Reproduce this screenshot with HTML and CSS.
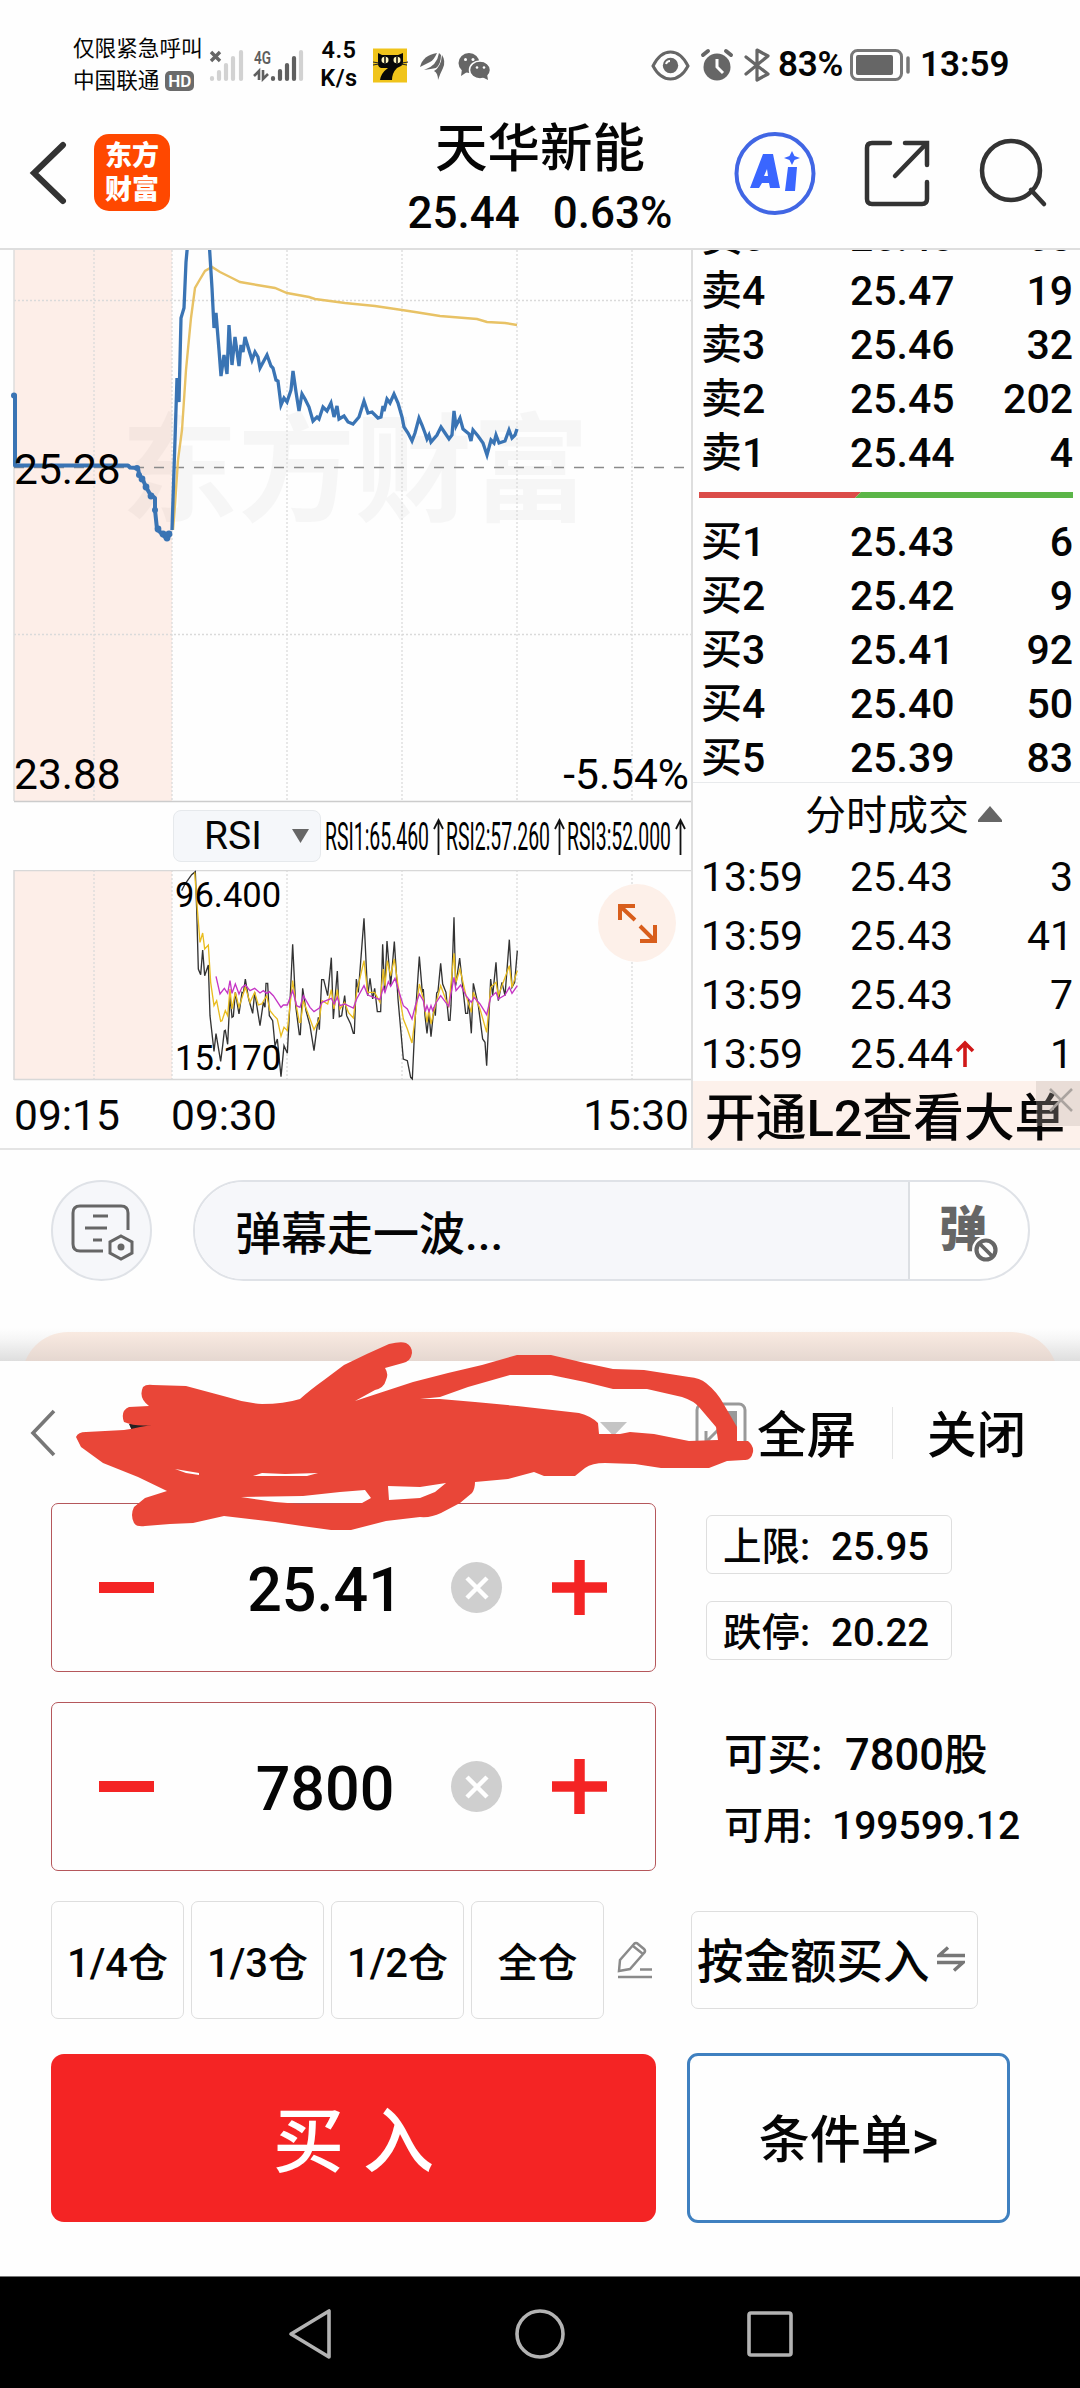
FILE: index.html
```html
<!DOCTYPE html>
<html lang="zh-CN">
<head>
<meta charset="utf-8">
<title>天华新能</title>
<link rel="stylesheet" href="styles.css">
</head>
<body>
<div class="phone">

  <div class="status">
    <div class="operator">
      <div>仅限紧急呼叫</div>
      <div class="operator-line">中国联通<span class="hd">HD</span></div>
    </div>
    <svg class="signals" width="103" height="34" viewBox="207 46 103 34">
      <path d="M211 50l9 9M220 50l-9 9" stroke="#666" stroke-width="3.4"/>
      <g stroke="#d2d2d2" stroke-width="4.2" stroke-linecap="round">
        <path d="M212 76v1M219 70v7M226 63v14M233 56v21M241 50v27M301 50v27"/>
      </g>
      <g stroke="#5f5f5f" stroke-width="4.2" stroke-linecap="round">
        <path d="M273 76v1M280 69v8M287 63v14M294 56v21"/>
      </g>
      <text x="254" y="62" textLength="17" lengthAdjust="spacingAndGlyphs" class="net">4G</text>
      <path d="M254 74l5-5v9M263 68v9l5-5" fill="none" stroke="#5f5f5f" stroke-width="2.6"/>
    </svg>
    <div class="speed"><div>4.5</div><div>K/s</div></div>
    <svg class="apps" width="122" height="36" viewBox="371 46 122 36">
      <rect x="373" y="47.500" width="34" height="34" fill="#f0c41b"/>
      <path d="M378 52l4 2h16l5-2v10q0 2-2 3l-4 2q-5 5-5 12h-12q1-7 8-12h-7q-2 0-3-3z" fill="#080808"/>
      <path d="M373 61l6 1M373 64l6-1M402 62l6-1M401 63l6 1" stroke="#222" stroke-width="1"/>
      <ellipse cx="385" cy="59" rx="3.500" ry="3.300" fill="#fff6bd"/><ellipse cx="397" cy="59" rx="3.500" ry="3.300" fill="#fff6bd"/>
      <path d="M385 56v6M397 56v6" stroke="#111" stroke-width="1.600"/>
      <g fill="#666">
        <path d="M420 66Q423 54 437 52Q434 59 430 61Q426 63 420 66Z"/>
        <path d="M424 69Q437 65 439 52L441 54Q441 63 436 67Q431 68 424 69Z"/>
        <path d="M434 70Q441 66 442 54Q446 60 443 67Q440 73 438 79Q438 72 434 70Z"/>
      </g>
      <g fill="#666">
        <ellipse cx="469" cy="62" rx="10.500" ry="10"/><path d="M462 68l-1 7 6-4z"/>
        <ellipse cx="480" cy="69" rx="10.500" ry="9" stroke="#fff" stroke-width="1.500"/><path d="M482 76l6 3-1-6z"/>
      </g>
      <g fill="#fff"><circle cx="465.500" cy="58.500" r="1.500"/><circle cx="473" cy="58.500" r="1.500"/><circle cx="477" cy="66.500" r="1.300"/><circle cx="484" cy="66.500" r="1.300"/></g>
    </svg>
    <div class="status-right">
      <svg width="122" height="36" viewBox="650 46 122 36">
        <path d="M653 65Q660 51 670.500 51T688 65Q681 78 670.500 78T653 65Z" fill="none" stroke="#666" stroke-width="3"/>
        <circle cx="670.500" cy="64.500" r="7.700" fill="#666"/><path d="M666 63q1-3 4-3" stroke="#fff" stroke-width="2" fill="none"/>
        <circle cx="717" cy="66" r="13.500" fill="#666"/>
        <path d="M703 54l5-4M731 54l-5-4" stroke="#666" stroke-width="4" stroke-linecap="round"/>
        <path d="M717 58v8l6 6" stroke="#fff" stroke-width="3" fill="none"/>
        <path d="M746 56l22 17-11 6V49l11 6-22 18" fill="none" stroke="#666" stroke-width="3.200" stroke-linejoin="round" stroke-linecap="round"/>
      </svg>
      <span class="percent">83%</span>
      <svg class="battery" width="62" height="34" viewBox="849 47 62 34">
        <rect x="851.500" y="49.500" width="50" height="29" rx="6" fill="none" stroke="#777" stroke-width="3"/>
        <rect x="856" y="54" width="37" height="20" rx="2" fill="#666"/>
        <path d="M908 57v14" stroke="#777" stroke-width="3.500" stroke-linecap="round"/>
      </svg>
      <span class="clock">13:59</span>
    </div>
  </div>

  <header class="header">
    <div class="header-left">
      <svg width="40" height="64" viewBox="0 0 40 64"><path d="M34 4L5 32l29 28" fill="none" stroke="#333" stroke-width="6" stroke-linecap="round"/></svg>
      <div class="logo"><span>东方</span><span>财富</span></div>
    </div>
    <div class="header-title">
      <h1>天华新能</h1>
      <div class="quote"><span>25.44</span><span>0.63%</span></div>
    </div>
    <div class="header-right">
      <svg width="82" height="84" viewBox="734 131 82 84">
        <ellipse cx="775" cy="173.500" rx="38.500" ry="39.500" fill="none" stroke="#4166e4" stroke-width="4"/>
        <path fill="#3a66ff" fill-rule="evenodd" d="M763 154h10l7 34h-10l-1-5h-7l-3 5h-9zM767 169l-3 7h4zM788 167h9l-2 24h-10zM792 151l2.500 5 5.500 2-5.500 2-2.500 5-2.500-5-5.500-2 5.500-2z"/>
      </svg>
      <svg width="70" height="70" viewBox="861 138 70 70">
        <path d="M889 143h-18q-5 0-5 5v51q0 5 5 5h50q5 0 5-5v-17M904 143h22v22M925 144l-31 32" fill="none" stroke="#333" stroke-width="4.500" stroke-linecap="round"/>
      </svg>
      <svg width="70" height="72" viewBox="978 137 70 72">
        <ellipse cx="1011" cy="170.500" rx="29" ry="29.500" fill="none" stroke="#333" stroke-width="4.500"/>
        <path d="M1031 190l13 14" stroke="#333" stroke-width="4.500" stroke-linecap="round"/>
      </svg>
    </div>
  </header>

  <main class="market">
    <section class="charts">
      <svg class="price-chart" width="691" height="553" viewBox="0 250 691 553">
        <rect x="14" y="250" width="158" height="551" fill="#fdeee8"/>
        <text x="121" y="512" textLength="468" class="watermark">东方财富</text>
        <g class="grid"><path d="M94 250v551M172 250v551M287 250v551M402 250v551M517 250v551M632 250v551M14 300.500h677M14 634.500h677"/></g>
        <path d="M14 250v551" stroke="#ddd" stroke-width="1.500"/>
        <path d="M14 801.500h677" stroke="#ccc" stroke-width="1.500"/>
        <path d="M14 467.500h677" stroke="#8b8b8b" stroke-width="1.600" stroke-dasharray="10 10"/>
        <polyline class="average" points="173,530 175,505 178,460 182,430 186,370 191,318 195,288 199,281 205,271 212,267 220,272 232,278 240,282 257,285 275,288 287,293 309,297 315,299 345,303 375,306 402,310 415,312 440,316 477,319 487,322 505,323 517,325"/>
        <polyline class="auction" points="15,396 15,465.500 128,465.500 130,467.500 138,468 139,474 143,480 146,487 150,494 155,498 155,510 157,529 162,534 167,539 170,534"/>
        <g fill="#3a74b4"><circle cx="14" cy="395.500" r="3"/><circle cx="137" cy="468" r="3"/><circle cx="139" cy="475" r="3"/><circle cx="142" cy="479" r="3.400"/><circle cx="146" cy="487" r="3.400"/><circle cx="151" cy="496" r="3.400"/><circle cx="155" cy="510" r="3"/><circle cx="158" cy="529" r="3.400"/><circle cx="163" cy="534" r="3.400"/><circle cx="167" cy="538" r="3.400"/><circle cx="169" cy="534" r="3.400"/></g>
        <polyline class="price" points="172,530 175,440 177,378 179,402 181,318 184,308 186,262 188,240 209,240 212,288 214,328 216,313 219,350 221,376 224,355 227,374 229,325 232,365 235,337 239,366 241,345 243,352 245,337 252,360 255,352 258,357 260,368 267,355 271,366 273,368 276,380 278,381 281,405 284,398 287,402 291,390 293,371 296,392 299,411 302,394 305,399 309,407 313,421 317,417 319,419 323,407 327,411 331,403 334,417 337,406 339,419 344,416 348,422 353,424 359,417 364,401 368,413 372,412 378,418 381,417 383,406 384,411 387,399 390,403 394,394 398,403 402,417 404,427 408,433 412,441 415,433 419,418 422,425 425,433 427,439 429,435 431,442 437,435 441,427 445,433 449,439 452,435 454,411 456,426 460,418 463,429 469,434 471,441 473,430 478,436 483,443 487,455 491,440 494,443 496,435 499,443 505,441 509,430 512,438 515,435 517,429"/>
        <text x="14" y="484" class="scale">25.28</text>
        <text x="14" y="789" class="scale">23.88</text>
        <text x="689" y="789" class="scale" text-anchor="end">-5.54%</text>
      </svg>

      <div class="indicator">
        <div class="picker"><span>RSI</span><svg width="18" height="15" viewBox="0 0 18 15"><path d="M0 0h17L8.500 14z" fill="#666"/></svg></div>
        <svg class="readings" width="366" height="52" viewBox="325 810 366 52">
          <text x="325" y="850" textLength="104" lengthAdjust="spacingAndGlyphs">RSI1:65.460</text>
          <text x="446" y="850" textLength="104" lengthAdjust="spacingAndGlyphs">RSI2:57.260</text>
          <text x="567" y="850" textLength="104" lengthAdjust="spacingAndGlyphs">RSI3:52.000</text>
          <path d="M438.500 855v-34M434 829l4.500-9 4.500 9M559.500 855v-34M555 829l4.500-9 4.500 9M680.500 855v-34M676 829l4.500-9 4.500 9" fill="none" stroke="#111" stroke-width="1.800"/>
        </svg>
      </div>

      <svg class="rsi-chart" width="691" height="211" viewBox="0 871 691 211">
        <rect x="14" y="871" width="158" height="210" fill="#fdeee8"/>
        <g class="grid"><path d="M94 871v210M172 871v210M287 871v210M402 871v210M517 871v210M632 871v210"/></g>
        <path d="M14 871.500h677M14 1080.500h677M14 871v210" fill="none" stroke="#d8d8d8" stroke-width="1.500"/>
        <g transform="translate(170 860) scale(.33333)" class="rsi-lines">
          <polyline stroke="#333" points="35,95 45,75 65,47 76,38 80,150 85,330 92,347 98,273 104,350 115,318 120,470 132,577 138,524 152,607 158,560 163,516 166,514 173,556 180,410 186,475 190,472 196,400 207,465 216,400 220,402 226,360 236,420 248,463 254,400 270,500 280,430 285,445 288,373 293,373 298,470 308,485 315,560 322,540 333,653 342,560 352,583 360,430 368,256 377,440 388,527 391,527 398,388 408,455 420,500 432,575 445,475 448,512 455,362 461,362 473,410 484,296 490,480 502,336 508,473 515,470 524,410 530,470 542,495 550,523 553,523 559,360 565,400 582,178 593,410 600,358 608,420 614,388 622,458 632,458 638,256 644,400 651,246 662,380 673,248 684,420 700,600 712,605 722,655 727,660 736,470 748,293 757,400 760,390 765,470 771,523 777,465 783,533 792,445 796,470 800,402 804,397 812,313 818,375 828,400 836,484 840,484 843,440 852,175 857,380 869,297 880,400 887,463 893,463 896,420 904,523 910,373 925,440 938,540 945,550 950,620 962,360 968,410 978,310 985,425 996,370 1005,410 1018,242 1026,385 1034,370 1042,275"/>
          <polyline stroke="#e9bd20" points="74,40 82,150 90,250 98,222 104,270 115,258 122,370 132,440 140,425 152,487 156,485 166,455 173,470 180,390 186,450 196,400 207,445 226,385 240,430 254,400 265,438 275,435 290,410 300,455 312,470 322,480 333,532 342,505 352,515 368,365 377,430 388,490 392,490 400,425 420,480 432,512 448,480 456,425 473,435 484,392 492,450 502,392 510,450 524,430 535,460 550,477 560,400 582,305 593,400 614,400 630,430 640,330 645,380 652,305 662,350 673,300 684,380 700,480 712,510 726,552 736,470 748,375 760,420 771,490 777,450 783,495 796,440 812,380 836,445 852,283 858,370 870,330 888,410 904,460 910,400 930,450 950,520 962,385 978,370 985,410 1018,320 1026,385 1042,335"/>
          <polyline stroke="#c535c5" points="138,352 150,405 163,388 173,403 180,365 186,403 196,375 207,405 216,385 226,378 240,395 254,388 270,402 280,395 290,403 298,398 310,410 333,445 340,438 352,438 368,395 380,440 390,445 400,410 420,445 432,458 448,447 456,430 484,418 492,435 502,415 510,440 524,435 550,447 560,420 582,380 593,408 630,422 640,385 645,400 655,368 662,382 675,358 686,395 700,440 712,450 726,480 736,440 748,405 760,425 766,458 771,440 777,458 783,440 788,455 796,435 812,410 836,442 852,355 858,395 872,378 888,410 904,430 912,415 930,435 950,467 962,415 978,400 985,420 1005,408 1018,385 1026,403 1042,380"/>
        </g>
        <text x="175" y="908" class="bound">96.400</text>
        <text x="175" y="1071" class="bound">15.170</text>
        <ellipse cx="637" cy="924" rx="39" ry="39" fill="#fdf0e9"/>
        <path d="M620 921v-14h15M620 907l15 14M655 926v16h-15M640 927l15 15" fill="none" stroke="#d85e1c" stroke-width="4"/>
      </svg>

      <div class="axis"><span>09:15</span><span>09:30</span><span class="axis-end">15:30</span></div>
    </section>

    <aside class="book">
      <div class="depth sells">
        <div class="level"><span>卖5</span><span>25.48</span><span>63</span></div>
        <div class="level"><span>卖4</span><span>25.47</span><span>19</span></div>
        <div class="level"><span>卖3</span><span>25.46</span><span>32</span></div>
        <div class="level"><span>卖2</span><span>25.45</span><span>202</span></div>
        <div class="level"><span>卖1</span><span>25.44</span><span>4</span></div>
      </div>
      <svg class="ratio" width="374" height="6" viewBox="0 0 374 6"><path d="M0 0h162l-6 6H0z" fill="#db4c49"/><path d="M162 0h212v6H156z" fill="#5bb548"/></svg>
      <div class="depth buys">
        <div class="level"><span>买1</span><span>25.43</span><span>6</span></div>
        <div class="level"><span>买2</span><span>25.42</span><span>9</span></div>
        <div class="level"><span>买3</span><span>25.41</span><span>92</span></div>
        <div class="level"><span>买4</span><span>25.40</span><span>50</span></div>
        <div class="level"><span>买5</span><span>25.39</span><span>83</span></div>
      </div>
      <div class="ticks-title">分时成交<svg width="24" height="16" viewBox="0 0 24 16"><path d="M12 0l12 14v2H0v-2z" fill="#666"/></svg></div>
      <div class="ticks">
        <div class="tick"><span>13:59</span><span>25.43</span><span>3</span></div>
        <div class="tick"><span>13:59</span><span>25.43</span><span>41</span></div>
        <div class="tick"><span>13:59</span><span>25.43</span><span>7</span></div>
        <div class="tick"><span>13:59</span><span>25.44<svg width="20" height="28" viewBox="0 0 20 28"><path d="M10 27V3M2 11l8-8 8 8" fill="none" stroke="#d01818" stroke-width="3.600"/></svg></span><span>1</span></div>
      </div>
      <div class="banner">开通L2查看大单
        <div class="banner-close"><svg width="26" height="26" viewBox="0 0 26 26"><path d="M2 2l22 22M24 2L2 24" stroke="#aaa39f" stroke-width="2.500"/></svg></div>
      </div>
    </aside>
  </main>

  <section class="comments">
    <div class="comment-row">
      <div class="round">
        <svg width="66" height="60" viewBox="70 1202 66 60">
          <g fill="none" stroke="#666" stroke-width="3">
            <path d="M129 1231v-17q0-7-7-7H81q-7 0-7 7v31q0 7 7 7h23M94 1217h15M86 1229h22M94 1241h9" />
            <path d="M122 1237l11 6v11l-11 6-11-6v-11z"/>
          </g><circle cx="122" cy="1248" r="3.500" fill="#666"/>
        </svg>
      </div>
      <div class="pill">
        <div class="pill-input">弹幕走一波...</div>
        <div class="pill-toggle"><span>弹</span>
          <svg class="ban" width="28" height="28" viewBox="0 0 28 28"><circle cx="14" cy="14" r="14" fill="#fefefe"/><circle cx="14" cy="14" r="9.500" fill="none" stroke="#666" stroke-width="4.200"/><path d="M8 8l12 12" stroke="#666" stroke-width="3.800"/></svg>
        </div>
      </div>
    </div>
    <div class="peek"></div>
  </section>

  <section class="sheet">
    <div class="sheet-head">
      <svg class="sheet-back" width="28" height="50" viewBox="0 0 28 50"><path d="M25 3L4 25l21 22" fill="none" stroke="#777" stroke-width="3.600"/></svg>
      <svg class="caret" width="27" height="14" viewBox="0 0 27 14"><path d="M0 0h27L13.500 14z" fill="#c4c4c4"/></svg>
      <svg class="full-icon" width="52" height="56" viewBox="0 0 52 56"><rect x="2" y="4" width="48" height="50" rx="6" fill="none" stroke="#999" stroke-width="3"/><path d="M24 11h18v18z" fill="#999"/><path d="M11 31v11h11M11 42l13-13" fill="none" stroke="#999" stroke-width="3"/></svg>
      <span class="full">全屏</span>
      <span class="rule"></span>
      <span class="close">关闭</span>
      <svg class="scribble" width="690" height="200" viewBox="70 1337 690 200">
        <path d="M129 1424h25v5h-6l-4-2-4 4h-8z" fill="#222"/>
        <path fill="#e94638" fill-rule="evenodd" d="M76 1437Q78 1432 86 1432L124 1430Q132 1429 140 1427L152 1425Q136 1427 124 1422Q120 1411 129 1407L149 1406Q138 1398 143 1387Q146 1384 153 1385L186 1386L227 1397Q245 1403 262 1404Q284 1404 300 1399Q310 1390 324 1380L344 1365Q366 1354 389 1344Q401 1341 406 1343Q412 1346 412 1353Q411 1361 403 1363L385 1368Q389 1374 386 1380Q384 1388 375 1390L355 1401L413 1382L448 1373L482 1365L517 1355H551L585 1363L613 1369L644 1370L689 1377Q700 1378 706 1383Q717 1392 723 1403L737 1427V1441L748 1441Q754 1446 753 1452Q751 1461 744 1460L727 1461L709 1468H661L635 1464L605 1463Q592 1463 585 1468L575 1476H544L534 1472L508 1479L475 1482Q475 1489 472 1493L460 1503L441 1513Q431 1518 420 1517L386 1521L351 1530H331L302 1526L275 1522L241 1518L224 1516L193 1523L170 1524L145 1526Q136 1527 134 1523Q130 1515 134 1507L145 1498L167 1491L138 1477L103 1463L81 1447Z
        M420 1399L440 1397L468 1387L510 1375H551L585 1382L613 1389H647L682 1397Q694 1401 699 1407L716 1427L718 1440L689 1441L654 1434L630 1432L620 1434H599L598 1423Q591 1416 579 1413L517 1406L475 1402L440 1399Z
        M241 1497L303 1496L340 1492L365 1490L371 1498L362 1503L300 1504L275 1502Z M388 1486L420 1487L446 1483L435 1492L420 1498L389 1500Z M253 1476L262 1473L285 1474L318 1473L307 1476Z M175 1469L199 1473V1475L186 1473Z"/>
      </svg>
    </div>

    <div class="form">
      <div class="stepper">
        <svg width="55" height="55" viewBox="0 0 55 55"><path d="M0 27.500h55" stroke="#f42424" stroke-width="11"/></svg>
        <span class="value">25.41</span>
        <span class="clear"><svg width="26" height="26" viewBox="0 0 26 26"><path d="M3 3l20 20M23 3L3 23" stroke="#fff" stroke-width="4.500"/></svg></span>
        <svg class="plus" width="55" height="55" viewBox="0 0 55 55"><path d="M0 27.500h55M27.500 0v55" stroke="#f42424" stroke-width="10.500"/></svg>
      </div>
      <div class="limits">
        <div class="limit"><span>上限:</span><span>25.95</span></div>
        <div class="limit"><span>跌停:</span><span>20.22</span></div>
      </div>

      <div class="stepper">
        <svg width="55" height="55" viewBox="0 0 55 55"><path d="M0 27.500h55" stroke="#f42424" stroke-width="11"/></svg>
        <span class="value">7800</span>
        <span class="clear"><svg width="26" height="26" viewBox="0 0 26 26"><path d="M3 3l20 20M23 3L3 23" stroke="#fff" stroke-width="4.500"/></svg></span>
        <svg class="plus" width="55" height="55" viewBox="0 0 55 55"><path d="M0 27.500h55M27.500 0v55" stroke="#f42424" stroke-width="10.500"/></svg>
      </div>
      <div class="funds">
        <div class="fund shares"><span>可买:</span><span>7800股</span></div>
        <div class="fund"><span>可用:</span><span>199599.12</span></div>
      </div>

      <div class="portions">
        <button>1/4仓</button><button>1/3仓</button><button>1/2仓</button><button>全仓</button>
        <svg width="36" height="38" viewBox="616 1942 36 38"><path d="M619 1972l1-11 14-16q2-2 4 0l6 5q2 2 0 4l-14 16zM618 1978h34M640 1970.500h12M633 1947l10 8" fill="none" stroke="#8a8a8a" stroke-width="2.500"/></svg>
      </div>
      <div class="mode"><span>按金额买入</span><svg width="28" height="26" viewBox="0 0 28 26"><path d="M28 9.500H2l9-8M0 16.500h26l-9 8" fill="none" stroke="#777" stroke-width="3.400"/></svg></div>

      <button class="buy">买<span>入</span></button>
      <button class="condition">条件单&gt;</button>
    </div>
  </section>

  <nav class="navbar">
    <svg width="48" height="56" viewBox="0 0 48 56"><path d="M43 5v46L5 28z" fill="none" stroke="#b3b3b3" stroke-width="3.600" stroke-linejoin="round"/></svg>
    <svg width="56" height="56" viewBox="0 0 56 56"><circle cx="28" cy="28" r="23" fill="none" stroke="#b3b3b3" stroke-width="3.600"/></svg>
    <svg width="48" height="56" viewBox="0 0 48 56"><rect x="3" y="7" width="42" height="42" rx="2" fill="none" stroke="#b3b3b3" stroke-width="3.600"/></svg>
  </nav>
</div>
</body>
</html>
```
FILE: styles.css
```css
* { box-sizing: border-box; }
body {
  margin: 0;
  background: #fdfdfd;
  color: #050505;
  font-family: Roboto, "Noto Sans CJK SC", sans-serif;
}
svg { display: block; flex: none; }
button { font: inherit; color: inherit; padding: 0; margin: 0; background: none; }
.phone { width: 1080px; height: 2388px; overflow: hidden; display: flex; flex-direction: column; background: #fefefe; }

/* system status bar */
.status { height: 97px; flex: none; padding: 32px 0 0 73px; display: flex; align-items: center; }
.operator { width: 134px; font-size: 21.6px; line-height: 32px; white-space: nowrap; }
.operator-line { display: flex; align-items: center; }
.hd { margin-left: 6px; width: 29px; height: 20px; border-radius: 5px; background: #6b6b6b; color: #fff; font-size: 17px; line-height: 20px; font-weight: 600; text-align: center; }
.net { font: 600 19px Roboto, sans-serif; fill: #5f5f5f; }
.speed { width: 42px; margin-left: 8px; font-size: 23.5px; line-height: 27.500px; font-weight: 600; text-align: center; white-space: nowrap; letter-spacing: .5px; }
.apps { margin-left: 11px; }
.status-right { flex: 1; display: flex; align-items: center; padding-left: 157px; font-size: 35px; line-height: 40px; font-weight: 600; }
.percent { width: 71px; margin-left: 6px; white-space: nowrap; letter-spacing: -.3px; }
.clock { margin-left: 9px; }

/* title bar */
.header { height: 153px; flex: none; display: flex; align-items: center; border-bottom: 2px solid #dedede; }
.header-left { width: 400px; padding-left: 29px; display: flex; align-items: center; gap: 25px; }
.logo { width: 76px; height: 77px; border-radius: 15px; background: #ff4800; color: #fff; font-size: 27px; font-weight: 900; line-height: 34px; padding-top: 5px; display: flex; flex-direction: column; align-items: center; }
.header-title { width: 280px; height: 151px; padding-top: 19px; text-align: center; white-space: nowrap; }
h1 { margin: 0; font-size: 52.500px; line-height: 66px; font-weight: 500; }
.quote { display: flex; justify-content: center; gap: 33px; font-size: 44px; line-height: 62px; font-weight: 500; }
.header-right { padding-left: 54px; display: flex; align-items: center; gap: 46px; }

/* charts and order book */
.market { height: 900px; flex: none; display: flex; border-bottom: 2px solid #e4e4e4; }
.charts { width: 691px; display: flex; flex-direction: column; }
.grid path { fill: none; stroke: #dadada; stroke-width: 1.300; stroke-dasharray: 2 2; }
.watermark { font: 700 117px "Noto Sans CJK SC", sans-serif; fill: #000; opacity: .028; }
.average { fill: none; stroke: #e8c265; stroke-width: 2.400; }
.auction { fill: none; stroke: #3a74b4; stroke-width: 4; stroke-linejoin: round; stroke-linecap: round; }
.price { fill: none; stroke: #3a74b4; stroke-width: 3.300; }
.scale { font-size: 42.500px; }
.bound { font-size: 34.500px; }
.indicator { height: 68px; padding-left: 173px; display: flex; align-items: flex-start; padding-top: 7px; gap: 4px; }
.picker { width: 148px; height: 52px; border: 1px solid #e6e9ec; border-radius: 8px; background: #f5f7fa; display: flex; align-items: center; justify-content: space-between; padding: 0 10px 0 30px; font-size: 39px; line-height: 50px; }
.readings { font-size: 39.500px; }
.rsi-lines polyline { fill: none; stroke-width: 4; }
.axis { height: 67px; padding: 0 2px 0 14px; display: flex; font-size: 42.500px; line-height: 70px; }
.axis span { width: 157px; white-space: nowrap; }
.axis .axis-end { flex: 1; text-align: right; }

.book { width: 389px; border-left: 2px solid #dedede; overflow: hidden; }
.sells { margin-top: -40.500px; }
.level, .tick { display: flex; height: 54px; line-height: 54px; padding: 0 7px 0 8px; font-size: 41px; font-weight: 500; white-space: nowrap; }
.level span:nth-child(1), .tick > span:nth-child(1) { width: 149px; }
.level span:nth-child(2), .tick > span:nth-child(2) { width: 130px; display: flex; align-items: center; }
.level span:nth-child(3), .tick > span:nth-child(3) { flex: 1; text-align: right; }
.ratio { margin: 12px 7px 17px 6px; }
.buys { height: 268px; border-bottom: 1px solid #e8eaec; }
.ticks-title { height: 65px; padding-left: 112px; display: flex; align-items: center; gap: 9px; font-size: 41px; line-height: 64px; padding-top: 1px; }
.ticks-title svg { margin-top: -4px; }
.tick { height: 59px; line-height: 59px; font-weight: 400; }
.tick svg { margin-left: 2px; }
.banner { position: relative; height: 68px; margin-top: -3px; padding-left: 12px; background: #fdf1eb; font-size: 50.700px; line-height: 76px; font-weight: 500; white-space: nowrap; }
.banner-close { position: absolute; right: 0; top: 0; width: 44px; height: 45px; background: rgba(190, 175, 168, .3); padding: 6px 0 0 12px; }

/* comment entry */
.comments { height: 211px; flex: none; padding-top: 30px; background: linear-gradient(#fefefe 178px, #f5f5f5 190px, #dedede 211px); overflow: hidden; }
.comment-row { display: flex; padding-left: 51px; gap: 41px; }
.round { width: 101px; height: 101px; border: 2px solid #dfe2e7; border-radius: 50%; background: #f6f7fa; display: flex; align-items: center; justify-content: center; }
.pill { width: 837px; height: 101px; border: 2px solid #dfe2e7; border-radius: 51px; overflow: hidden; display: flex; background: #fefefe; }
.pill-input { width: 715px; padding-left: 40px; background: #f6f7fa; border-right: 2px solid #dcdfe3; font-size: 46px; line-height: 105px; font-weight: 500; }
.pill-toggle { display: flex; padding-left: 29px; color: #666; font-size: 48px; line-height: 96px; font-weight: 900; }
.ban { margin: 54px 0 0 -15px; }
.peek { height: 92px; margin: 51px 22px 0; border-radius: 46px; background: linear-gradient(#f9eae1, #e5d7d0 29px); }

/* order sheet */
.sheet { height: 915px; flex: none; background: #fefefe; }
.sheet-head { position: relative; height: 142px; padding: 2px 0 0 29px; display: flex; align-items: center; font-size: 49.500px; line-height: 60px; font-weight: 500; white-space: nowrap; }
.caret { margin: -8px 0 0 543px; }
.full-icon { margin: -10px 0 0 68px; }
.full, .close { padding-top: 5px; }
.full { margin-left: 10px; }
.rule { width: 1px; height: 52px; margin: 0 34px 0 36px; background: #e4e4e4; }
.scribble { position: absolute; left: 70px; top: -24px; }
.form { display: grid; grid-template-columns: 605px auto; grid-template-rows: 169px 169px 118px 169px; row-gap: 30px; padding-left: 51px; justify-content: start; }
.stepper { border: 1.500px solid #b5575b; border-radius: 7px; display: flex; align-items: center; padding-left: 47px; }
.value { width: 250px; margin-left: 46px; font-size: 61px; line-height: 70px; font-weight: 500; text-align: center; padding-top: 5px; }
.clear { width: 51px; height: 51px; margin-left: 1px; border-radius: 50%; background: #cfcfcf; display: flex; align-items: center; justify-content: center; }
.plus { margin-left: 50px; }
.limits { padding: 12px 0 0 50px; display: flex; flex-direction: column; gap: 27px; }
.limit { width: 246px; height: 59px; border: 1.500px solid #dedede; border-radius: 6px; display: flex; padding-left: 16px; font-size: 38.500px; line-height: 62px; font-weight: 500; white-space: nowrap; }
.limit span:first-child, .fund span:first-child { width: 108px; }
.funds { padding: 19px 0 0 68px; }
.fund { display: flex; font-size: 39px; line-height: 70px; font-weight: 500; white-space: nowrap; }
.fund.shares { font-size: 43.500px; }
.fund.shares span:first-child { width: 121px; }
.portions { display: flex; align-items: center; gap: 7px; }
.portions button { width: 133px; height: 118px; border: 1.500px solid #dedede; border-radius: 7px; font-size: 40px; font-weight: 500; line-height: 114px; padding-top: 5px; white-space: nowrap; }
.portions svg { margin-left: 5px; }
.mode { width: 287px; height: 98px; margin: 10px 0 0 35px; border: 1.500px solid #dedede; border-radius: 7px; display: flex; align-items: center; gap: 7px; padding-left: 5px; font-size: 46.500px; line-height: 98px; font-weight: 500; white-space: nowrap; }
.mode span { padding-top: 4px; }
.mode svg { margin-top: -2px; }
.buy { height: 168px; margin-top: 5px; border: 0; border-radius: 13px; background: #f42424; color: #fff; font-size: 71px; line-height: 160px; padding-top: 8px; font-weight: 500; }
.buy span { margin-left: 19px; }
.condition { width: 323px; height: 170px; margin: 4px 0 0 31px; border: 3px solid #3f80c0; border-radius: 11px; font-size: 51px; line-height: 158px; padding-top: 6px; font-weight: 500; }

.navbar { height: 112px; flex: none; background: #000; border-top: 1px solid #777; display: flex; align-items: center; justify-content: center; gap: 178px; padding-top: 2px; }
```
